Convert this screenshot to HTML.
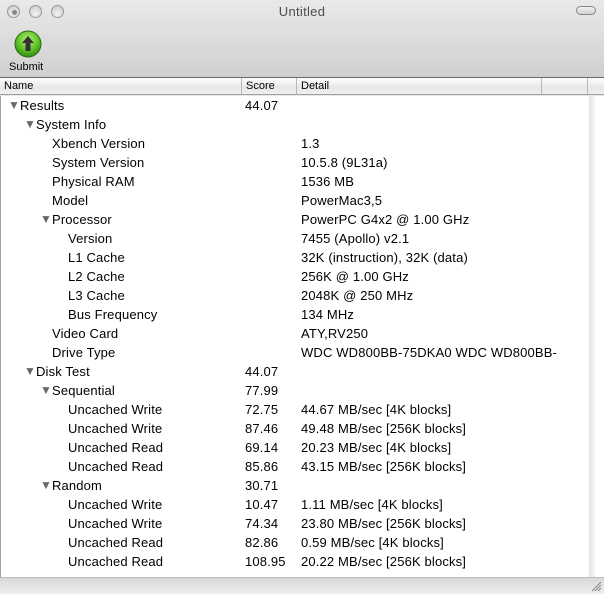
<!DOCTYPE html>
<html><head><style>
*{margin:0;padding:0;box-sizing:border-box}
body{width:604px;height:594px;overflow:hidden;background:#e8e8e8;font-family:"Liberation Sans",sans-serif;position:relative}
.tb{position:absolute;left:0;top:0;width:604px;height:78px;background:linear-gradient(#e9e9e9,#d0d0d0);border-bottom:1px solid #6a6a6a}
.tl{position:absolute;top:5px;width:13px;height:13px;border-radius:50%;background:radial-gradient(circle at 50% 70%,#f4f4f4,#c4c4c4);border:1px solid #9a9a9a}
.title{position:absolute;top:4px;left:0;width:604px;text-align:center;font-size:13px;color:#4d4d4d;letter-spacing:0.3px}
.pill{position:absolute;left:576px;top:6px;width:20px;height:9px;border:1px solid #888;border-radius:5px;background:linear-gradient(#f0f0f0,#d0d0d0)}
.hdr{position:absolute;top:78px;left:0;width:604px;height:17px;background:linear-gradient(#fff,#e6e6e6 60%,#f0f0f0);border-bottom:1px solid #a0a0a0;font-size:11px;color:#000}
.hdr div{position:absolute;top:0;height:16px;line-height:16px;padding-left:4px;border-right:1px solid #b8b8b8}
.list{position:absolute;top:96px;left:0;width:588px;height:481px;background:#fff;border-left:1px solid #a0a0a0}
.sb{position:absolute;top:96px;left:588px;width:16px;height:481px;background:#fff}
.sb div{position:absolute;left:1px;top:0;width:6px;height:481px;background:linear-gradient(90deg,#e4e4e4,#f8f8f8)}
.r{position:absolute;left:0;height:19px;line-height:19px;font-size:13px;color:#000;white-space:nowrap;width:588px;letter-spacing:0.15px}
.r span{position:absolute;top:0}
.t{font-size:12px;color:#6a6a6a;letter-spacing:0}
.s{left:244px}.d{left:300px}
.bot{position:absolute;top:577px;left:0;width:604px;height:17px;background:linear-gradient(#d8d8d8,#eee);border-top:1px solid #bbb}
</style></head><body>
<div class="tb">
<div class="tl" style="left:7px"></div><div class="tl" style="left:29px"></div><div class="tl" style="left:51px"></div>
<div style="position:absolute;left:12px;top:10px;width:5px;height:5px;border-radius:50%;background:#888"></div>
<div class="title">Untitled</div>
<div class="pill"></div>
<svg style="position:absolute;left:14px;top:30px" width="28" height="28" viewBox="0 0 28 28">
<defs><radialGradient id="g" cx="50%" cy="35%" r="65%"><stop offset="0" stop-color="#b8f07a"/><stop offset="0.6" stop-color="#5fc226"/><stop offset="1" stop-color="#2f8a10"/></radialGradient></defs>
<circle cx="14" cy="14" r="13" fill="url(#g)" stroke="#2c6e10"/>
<path d="M14 6 L20 13 L16.5 13 L16.5 21 L11.5 21 L11.5 13 L8 13 Z" fill="#333"/>
</svg>
<div style="position:absolute;left:9px;top:61px;font-size:11px;color:#000">Submit</div>
</div>
<div class="hdr">
<div style="left:0;width:242px">Name</div>
<div style="left:242px;width:55px">Score</div>
<div style="left:297px;width:245px">Detail</div>
<div style="left:542px;width:46px"></div>
</div>
<div class="list">
<div class="r" style="top:0"><span class="t" style="left:7px">▼</span><span style="left:19px">Results</span><span class="s">44.07</span></div>
<div class="r" style="top:19px"><span class="t" style="left:23px">▼</span><span style="left:35px">System Info</span></div>
<div class="r" style="top:38px"><span style="left:51px">Xbench Version</span><span class="d">1.3</span></div>
<div class="r" style="top:57px"><span style="left:51px">System Version</span><span class="d">10.5.8 (9L31a)</span></div>
<div class="r" style="top:76px"><span style="left:51px">Physical RAM</span><span class="d">1536 MB</span></div>
<div class="r" style="top:95px"><span style="left:51px">Model</span><span class="d">PowerMac3,5</span></div>
<div class="r" style="top:114px"><span class="t" style="left:39px">▼</span><span style="left:51px">Processor</span><span class="d">PowerPC G4x2 @ 1.00 GHz</span></div>
<div class="r" style="top:133px"><span style="left:67px">Version</span><span class="d">7455 (Apollo) v2.1</span></div>
<div class="r" style="top:152px"><span style="left:67px">L1 Cache</span><span class="d">32K (instruction), 32K (data)</span></div>
<div class="r" style="top:171px"><span style="left:67px">L2 Cache</span><span class="d">256K @ 1.00 GHz</span></div>
<div class="r" style="top:190px"><span style="left:67px">L3 Cache</span><span class="d">2048K @ 250 MHz</span></div>
<div class="r" style="top:209px"><span style="left:67px">Bus Frequency</span><span class="d">134 MHz</span></div>
<div class="r" style="top:228px"><span style="left:51px">Video Card</span><span class="d">ATY,RV250</span></div>
<div class="r" style="top:247px"><span style="left:51px">Drive Type</span><span class="d">WDC WD800BB-75DKA0 WDC WD800BB-</span></div>
<div class="r" style="top:266px"><span class="t" style="left:23px">▼</span><span style="left:35px">Disk Test</span><span class="s">44.07</span></div>
<div class="r" style="top:285px"><span class="t" style="left:39px">▼</span><span style="left:51px">Sequential</span><span class="s">77.99</span></div>
<div class="r" style="top:304px"><span style="left:67px">Uncached Write</span><span class="s">72.75</span><span class="d">44.67 MB/sec [4K blocks]</span></div>
<div class="r" style="top:323px"><span style="left:67px">Uncached Write</span><span class="s">87.46</span><span class="d">49.48 MB/sec [256K blocks]</span></div>
<div class="r" style="top:342px"><span style="left:67px">Uncached Read</span><span class="s">69.14</span><span class="d">20.23 MB/sec [4K blocks]</span></div>
<div class="r" style="top:361px"><span style="left:67px">Uncached Read</span><span class="s">85.86</span><span class="d">43.15 MB/sec [256K blocks]</span></div>
<div class="r" style="top:380px"><span class="t" style="left:39px">▼</span><span style="left:51px">Random</span><span class="s">30.71</span></div>
<div class="r" style="top:399px"><span style="left:67px">Uncached Write</span><span class="s">10.47</span><span class="d">1.11 MB/sec [4K blocks]</span></div>
<div class="r" style="top:418px"><span style="left:67px">Uncached Write</span><span class="s">74.34</span><span class="d">23.80 MB/sec [256K blocks]</span></div>
<div class="r" style="top:437px"><span style="left:67px">Uncached Read</span><span class="s">82.86</span><span class="d">0.59 MB/sec [4K blocks]</span></div>
<div class="r" style="top:456px"><span style="left:67px">Uncached Read</span><span class="s" style="left:244px">108.95</span><span class="d">20.22 MB/sec [256K blocks]</span></div>
</div>
<div class="sb"><div></div></div>
<div class="bot"></div>
<svg style="position:absolute;left:590px;top:580px" width="12" height="12"><path d="M11 2L2 11M11 5L5 11M11 8L8 11" stroke="#888" stroke-width="1"/></svg>
</body></html>
